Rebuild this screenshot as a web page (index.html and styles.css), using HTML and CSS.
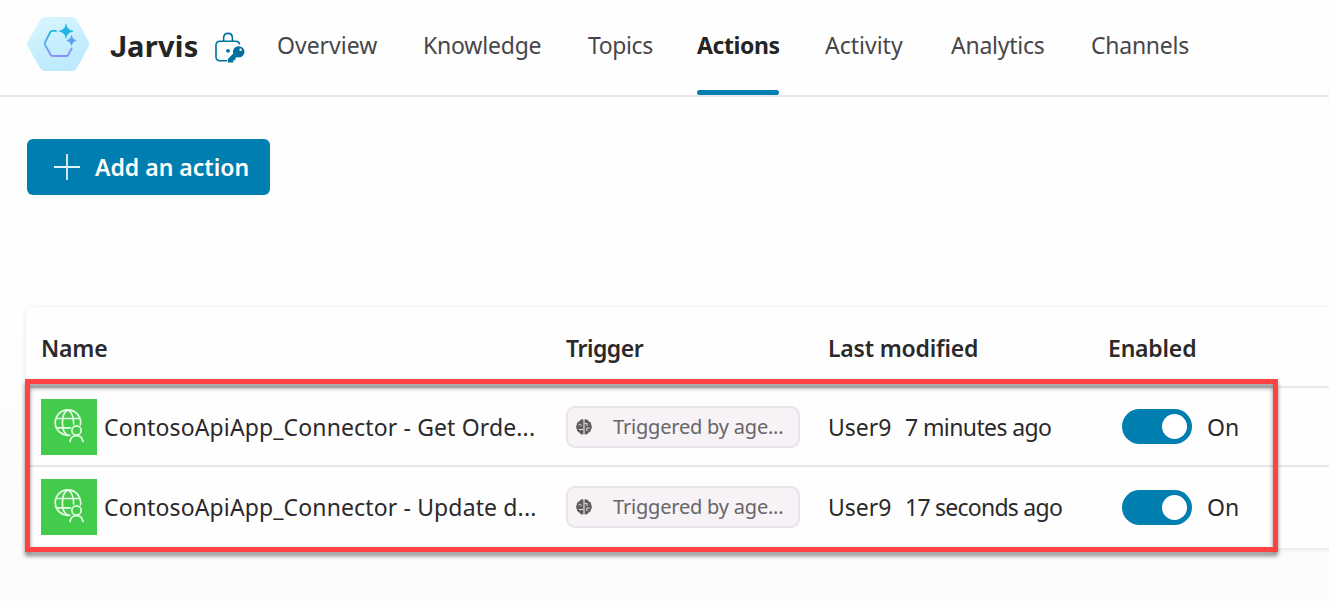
FILE: index.html
```html
<!DOCTYPE html>
<html lang="en">
<head>
<meta charset="utf-8">
<title>Jarvis - Actions</title>
<link rel="stylesheet" href="styles.css">
</head>
<body>
<svg width="0" height="0" class="defs" aria-hidden="true">
  <defs>
    <linearGradient id="hexBg" x1="0" y1="0" x2=".4" y2="1"><stop offset="0" stop-color="#dcf6fe"/><stop offset=".55" stop-color="#c9effe"/><stop offset="1" stop-color="#bdeaff"/></linearGradient>
    <linearGradient id="hexLine" gradientUnits="userSpaceOnUse" x1="28" y1="13" x2="33" y2="40"><stop offset="0" stop-color="#22b5e2"/><stop offset=".5" stop-color="#6aa5f3"/><stop offset="1" stop-color="#8f8ff8"/></linearGradient>
    <symbol id="globe" viewBox="0 0 56 56">
      <g fill="none" stroke="#e6fbe6" stroke-width="1.7" stroke-linecap="round">
        <path d="M28.500 36.200A12.700 12.700 0 1 1 39.400 26"/>
        <path d="M27 11C23.400 12.600 21.400 17.500 21.400 23.700S23.400 34.800 27 36.400M27 11C30.600 12.600 32.600 17.500 32.600 25M15.500 19.500H38.500M15.500 28.800H29.500"/>
        <circle cx="35.500" cy="31.500" r="4.600"/>
        <path d="M29 42.500C29.600 38.600 31.500 36.600 35.500 36.600S41.400 38.600 42 42.500"/>
      </g>
    </symbol>
    <symbol id="brain" viewBox="0 0 16 16">
      <path d="M7.500 .5C5.500 0 4 .8 3.500 2.200 1.600 2.600.7 4 .9 5.500-.2 7-.1 9 .9 10.200 1 12 2 13.400 3.600 13.700 4.300 15.200 6 15.800 7.500 15.300ZM8.500 .5C10.500 0 12 .8 12.500 2.200c1.900.4 2.800 1.800 2.600 3.300 1.100 1.500 1 3.500 0 4.700-.1 1.800-1.100 3.200-2.700 3.500-.7 1.500-2.400 2.100-3.900 1.600Z" fill="#605e5e"/>
      <path d="M2.500 6.200C4 4.800 5.500 5.500 5.400 7M3 10.500H7.500M8.500 4.500H11V7M13.500 9H10.800V12" fill="none" stroke="#e5e1e4" stroke-width="1"/>
    </symbol>
  </defs>
</svg>
<header class="topbar">
  <svg class="logo" viewBox="0 0 64 54">
    <path d="M19 0H46Q49 0 50.600 2.600L62.500 24Q64 27 62.500 30L50.600 51.400Q49 54 46 54H19Q16 54 14.400 51.400L2 30Q.5 27 2 24L14.400 2.600Q16 0 19 0Z" fill="url(#hexBg)"/>
    <path d="M30 13.900H26.200Q25 13.900 24.300 15L19.200 25.100Q18.500 26.600 19.200 28.100L24.800 38Q25.400 39 26.600 39H40.500Q41.700 39 42.200 38L45.600 31.600" fill="none" stroke="url(#hexLine)" stroke-width="1.900" stroke-linecap="round"/>
    <path d="M40 7.300Q40.900 13.100 47 14.200Q40.900 15.300 40 21.100Q39.100 15.300 33 14.200Q39.100 13.100 40 7.300Z" fill="#24b4e5" stroke="#24b4e5" stroke-width=".7"/>
    <path d="M45.500 18.500Q46.200 22.800 50.300 23.500Q46.200 24.200 45.500 28.500Q44.800 24.200 40.700 23.500Q44.800 22.800 45.500 18.500Z" fill="#5b9cf0" stroke="#5b9cf0" stroke-width=".6"/>
  </svg>
  <h1 class="title"><span class="initial">J</span>arvis</h1>
  <svg class="lock" viewBox="0 0 30 32">
    <g fill="none" stroke="#00719f" stroke-width="1.600">
      <path d="M12 28.800H5Q1 28.800 1 24.800V13.200Q1 9.200 5 9.200H20.500Q24.500 9.200 24.500 12.500"/>
      <path d="M8.600 9V6Q8.600 1.400 13 1.400T17.400 6V9"/>
    </g>
    <circle cx="13" cy="18.800" r="1.900" fill="#00719f"/>
    <path d="M23.500 14.200A5.600 5.600 0 1 1 21.800 25L20.300 26.400V28.300H18.200V30.600H13.200Q12.800 30.600 12.800 29.700V27L18.300 21.600A5.600 5.600 0 0 1 23.500 14.200Z" fill="#00719f"/>
    <circle cx="25.600" cy="17.800" r="1.200" fill="#fff"/>
  </svg>
  <nav class="tabs">
    <a class="tab">Overview</a>
    <a class="tab t-knowledge">Knowledge</a>
    <a class="tab t-topics">Topics</a>
    <a class="tab active">Actions</a>
    <a class="tab">Activity</a>
    <a class="tab t-analytics">Analytics</a>
    <a class="tab t-channels">Channels</a>
  </nav>
</header>
<main class="content">
  <button class="add">
    <svg class="plus" viewBox="0 0 26 26"><path d="M13 0V26M0 13H26" stroke="#e2f4fb" stroke-width="1.800"/></svg>
    <span>Add an action</span>
  </button>
  <section class="table">
    <div class="row head">
      <span>Name</span><span class="h-trigger">Trigger</span><span>Last modified</span><span>Enabled</span>
    </div>
    <div class="row">
      <div class="name"><svg class="conn"><use href="#globe"/></svg><span>ContosoApiApp_Connector - Get Orde...</span></div>
      <div class="pill"><svg class="brain"><use href="#brain"/></svg><span>Triggered by age...</span></div>
      <div class="mod"><span class="user">User9</span><span class="when">7 minutes ago</span></div>
      <div class="enabled"><span class="toggle"></span><span>On</span></div>
    </div>
    <div class="row last">
      <div class="name"><svg class="conn"><use href="#globe"/></svg><span>ContosoApiApp_Connector - Update d...</span></div>
      <div class="pill"><svg class="brain"><use href="#brain"/></svg><span>Triggered by age...</span></div>
      <div class="mod"><span class="user">User9</span><span class="when">17 seconds ago</span></div>
      <div class="enabled"><span class="toggle"></span><span>On</span></div>
    </div>
    <div class="highlight"></div>
  </section>
</main>
</body>
</html>
```
FILE: styles.css
```css
* { box-sizing: border-box; }
body {
  margin: 0;
  height: 601px;
  overflow: hidden;
  background: linear-gradient(#fefefe 0, #fefefe 52%, #fdfbfd 100%);
  color: #2b2a2b;
  font: 23px/32px "Noto Sans", "Open Sans", sans-serif;
  white-space: nowrap;
}
.defs { display: block; height: 0; }
.topbar {
  display: flex;
  height: 97px;
  padding-left: 26px;
  background: #fefefe;
  border-bottom: 2px solid #e8e4e7;
}
.logo { width: 64px; height: 54px; margin-top: 17px; }
.title { width: 105px; margin: 26px 0 0 20px; color: #242424; font-size: 29px; line-height: 40px; font-weight: 700; letter-spacing: .3px; }
.initial { font-family: Roboto, sans-serif; font-size: 30px; line-height: 1; }
.lock { width: 30px; height: 32px; margin-top: 32px; }
.tabs {
  display: grid;
  grid-template-columns: 146px 165px 109px 128px 126px 140px 110px;
  margin-left: 32px;
}
.tab { justify-self: start; height: 96px; padding-top: 29px; color: #484648; }
.t-knowledge { letter-spacing: -.2px; }
.t-topics { letter-spacing: -.4px; }
.t-analytics, .t-channels { letter-spacing: -.25px; }
.active { width: 82px; color: #242424; font-weight: 700; letter-spacing: -.4px; }
.active::after { content: ""; display: block; height: 5px; margin-top: 29px; border-radius: 3px; background: #007eaf; }
.content { padding: 42px 0 0 27px; }
.add {
  display: flex;
  align-items: center;
  width: 243px;
  height: 56px;
  padding: 0 0 0 27px;
  gap: 15px;
  border: 0;
  border-radius: 6px;
  background: #007eaf;
  color: #fff;
  font: 600 23px/32px "Noto Sans", "Open Sans", sans-serif;
}
.plus { width: 26px; height: 26px; flex: none; }
.table {
  position: relative;
  width: 1320px;
  margin: 112px 0 0 -1px;
  border-radius: 8px;
  background: #fefefe;
  box-shadow: 0 1px 4px rgba(60, 50, 100, .15);
}
.row {
  display: grid;
  grid-template-columns: 525px 262px 280px 200px;
  align-items: center;
  height: 79px;
  padding-left: 15px;
  border-top: 2px solid #e9e7e9;
}
.row.last { height: 83px; padding-bottom: 1px; }
.row.head { height: 79px; padding-top: 2px; border: 0; font-weight: 600; letter-spacing: -.2px; }
.h-trigger { letter-spacing: -.5px; }
.name { display: flex; align-items: center; gap: 7px; letter-spacing: .13px; }
.conn { width: 56px; height: 56px; background: #43cb4c; }
.pill {
  display: flex;
  align-items: center;
  width: 234px;
  height: 42px;
  padding-left: 8px;
  gap: 21px;
  border: 2px solid #e8e4e9;
  border-radius: 9px;
  background: #f6f2f6;
  color: #686568;
  font-size: 20px;
  letter-spacing: -.2px;
}
.brain { width: 16px; height: 16px; flex: none; }
.mod { display: flex; }
.user { width: 77px; }
.when { letter-spacing: -.6px; }
.row.last .when { letter-spacing: -.75px; }
.enabled { display: flex; align-items: center; padding-left: 14px; gap: 15px; }
.toggle {
  width: 70px;
  height: 35px;
  padding: 5px;
  border-radius: 18px;
  background: #007eaf;
}
.toggle::after { content: ""; display: block; width: 25px; height: 25px; margin-left: 35px; border-radius: 50%; background: #fff; }
.highlight {
  position: absolute;
  left: -1px;
  top: 72px;
  width: 1253px;
  height: 173px;
  border: 5px solid #ff4343;
  filter: drop-shadow(0 4px 2px rgba(0, 0, 0, .45));
}
```
